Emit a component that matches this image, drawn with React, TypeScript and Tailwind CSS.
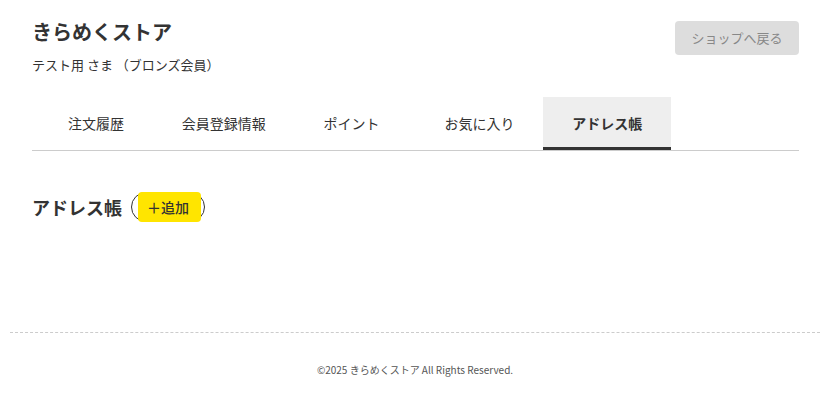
// @ts-nocheck
import React, { useState } from "react";

const tabs = ["注文履歴", "会員登録情報", "ポイント", "お気に入り", "アドレス帳"];

export default function App() {
  const [active, setActive] = useState("アドレス帳");

  return (
    <div
      className="min-h-screen bg-white text-[#333] flex flex-col"
      style={{ fontFamily: '"Noto Sans CJK JP", "Noto Sans", sans-serif' }}
    >
      <div className="pl-8 pr-[21px] pt-[17px]">
        <header className="flex items-start justify-between">
          <div>
            <h1 className="text-[20px] font-bold leading-[30px]">きらめくストア</h1>
            <p className="text-[13px] mt-[8px] leading-[20px]">テスト用 さま （ブロンズ会員）</p>
          </div>
          <button className="mt-[4px] h-[34px] w-[124px] rounded bg-[#dddddd] text-[#888] text-[13px]">
            ショップへ戻る
          </button>
        </header>

        <nav className="mt-[22px] grid grid-cols-6 border-b border-[#cccccc]">
          {tabs.map((t) => (
            <button
              key={t}
              onClick={() => setActive(t)}
              className={`h-[53px] text-[14px] ${
                active === t ? "bg-[#eeeeee] font-bold border-b-[3px] border-[#333] -mb-px pt-[3px]" : ""
              }`}
            >
              {t}
            </button>
          ))}
        </nav>

        <section className="mt-[41px] flex items-center gap-[9px]">
          <h2 className="text-[18px] font-bold">アドレス帳</h2>
          <button className="h-[30px] rounded-full border border-[#333] pl-[6px] pr-[3px] flex items-stretch">
            <span className="bg-[#ffe500] rounded-[4px] pl-[9px] pr-[12px] flex items-center text-[14px] font-medium -my-px">
              ＋追加
            </span>
          </button>
        </section>
      </div>

      <footer className="mt-[110px] ml-[10px] border-t border-dashed border-[#cccccc] pt-[29px] text-center text-[10px] text-[#555]">
        ©2025 きらめくストア All Rights Reserved.
      </footer>
    </div>
  );
}
